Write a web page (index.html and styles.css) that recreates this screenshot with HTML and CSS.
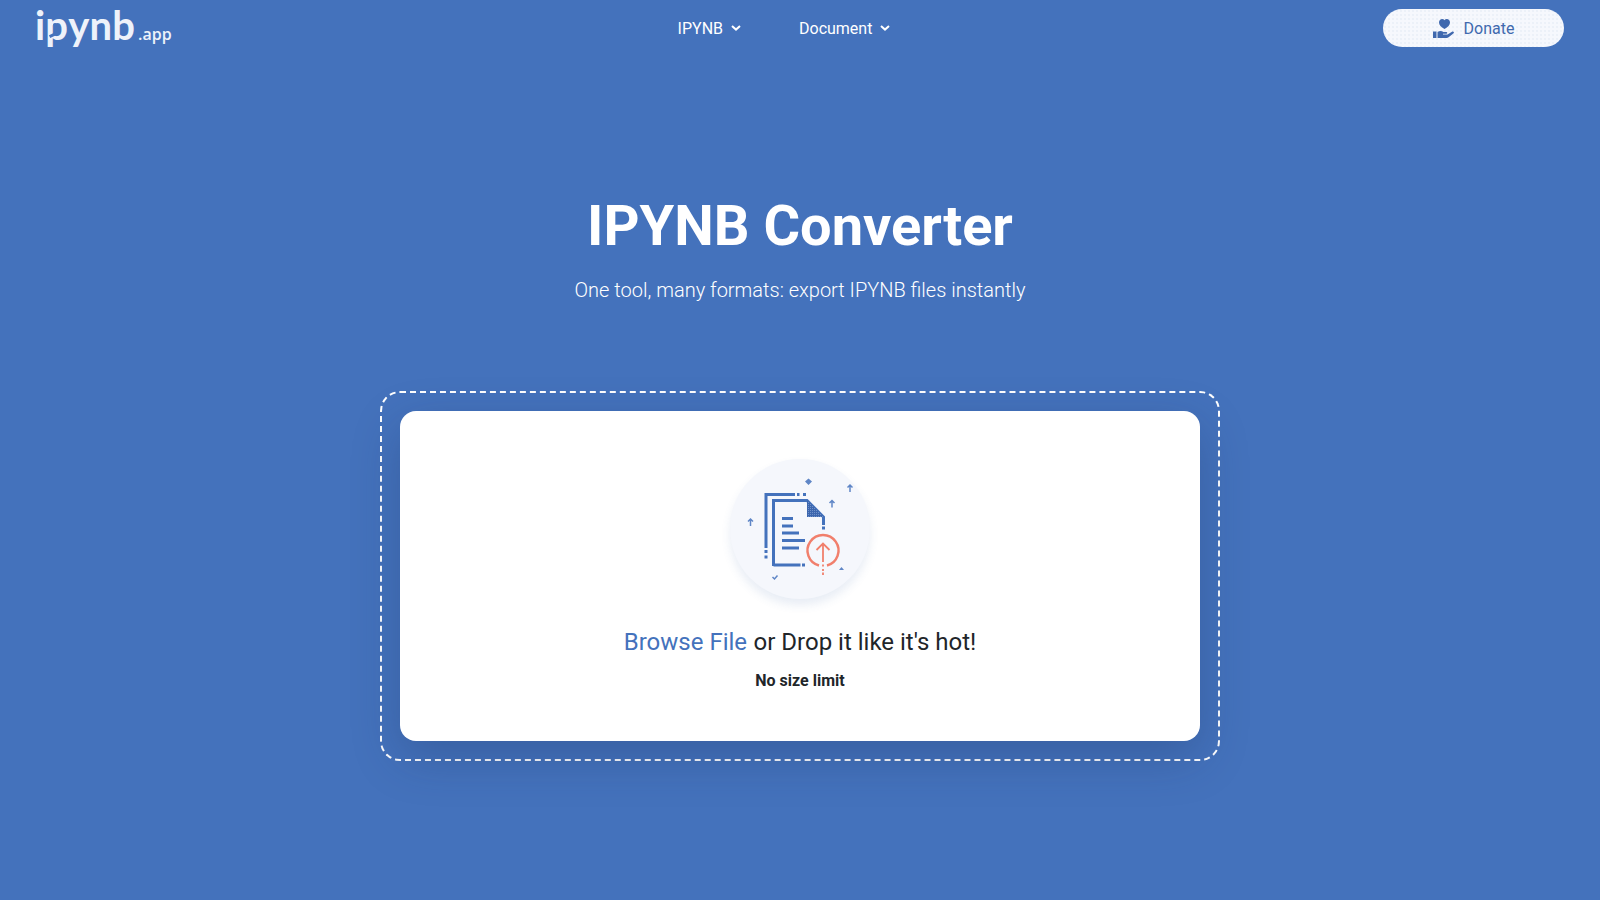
FILE: index.html
```html
<!DOCTYPE html>
<html lang="en">
<head>
<meta charset="utf-8">
<title>IPYNB Converter</title>
<link rel="stylesheet" href="styles.css">
</head>
<body>
<header class="topbar">
  <a class="logo" href="#"><span class="logo-main">i<span class="logo-p">p</span>ynb</span><span class="logo-app">.app</span></a>
  <nav class="nav">
    <a class="nav-link" href="#">IPYNB
      <svg class="chev" viewBox="0 0 10 6"><path d="M1 1l4 3.6L9 1" /></svg></a>
    <a class="nav-link" href="#">Document
      <svg class="chev" viewBox="0 0 10 6"><path d="M1 1l4 3.6L9 1" /></svg></a>
  </nav>
  <a class="donate" href="#">
    <svg class="donate-icon" viewBox="0 0 22 19"><path d="M11.500 10C8 7.800 6 6 6 3.400 6 1.400 7.500 0 9.200 0c1 0 1.800.4 2.300 1.200C12 .4 12.800 0 13.800 0 15.500 0 17 1.400 17 3.400 17 6 15 7.800 11.500 10z"/><path d="M0 12.500h3.500V19H0z"/><path d="M4.500 13c2-1.500 4-1.500 6 0h3c1 0 1 1.800 0 1.800H10v.7h4.500l4.500-2.800c1.200-.6 2.600.7 1.600 1.600l-5 4c-.6.500-1.200.7-2 .7H4.500z"/></svg>
    Donate
  </a>
</header>
<main class="main">
  <h1 class="title">IPYNB Converter</h1>
  <p class="subtitle">One tool, many formats: export IPYNB files instantly</p>
  <section class="dropzone">
    <div class="card">
      <div class="badge">
        <svg class="badge-art" viewBox="10 9 140 140">
          <defs>
            <pattern id="dots" width="2" height="2" patternUnits="userSpaceOnUse">
              <rect width="2" height="2" fill="#3c66ae"/>
              <rect width="1" height="1" fill="#6f90c9"/>
            </pattern>
          </defs>
          <g class="blue-line">
            <path d="M46 98V44.500H75M77 44.500h2.500M83 44.500h3M46 100v3M46 105.500v3"/>
            <path d="M53.500 116V50.500H87L103.500 67v8M103.500 76.500v3M53.500 115h27M82 115h3"/>
            <path d="M62 68.500h11M62 76h11M62 83h17M62 90.500h23M62 98h17"/>
          </g>
          <path class="fold" d="M87 50l17 17H87z"/>
          <g class="red-line">
            <path d="M99 115.500A15.500 15.500 0 1 1 107 115.500"/>
            <path class="red-thin" d="M103 94v18M96.500 100l6.500-6.500 6.500 6.500M103 114.500v2M103 119v2M103 122.500v2.500"/>
          </g>
          <g class="spark">
            <path d="M30.500 76v-7M28 71.500l2.500-2.500 2.500 2.500"/>
            <path d="M112 57.500v-7M109.500 53l2.500-2.500 2.500 2.500"/>
            <path d="M130 42v-7M127.500 37.500l2.500-2.500 2.500 2.500"/>
            <path d="M52.500 127l2 2 3-3.500"/>
          </g>
          <path class="spark-fill" d="M88.500 28.500l3.500 3-3.500 3.500-3.500-3.500zM121.500 117l2.500 3h-5z"/>
        </svg>
      </div>
      <p class="prompt"><a class="browse" href="#">Browse File</a> or Drop it like it's hot!</p>
      <p class="limit">No size limit</p>
    </div>
  </section>
</main>
</body>
</html>
```
FILE: styles.css
```css
* { box-sizing: border-box; }
html, body { height: 100%; }
body {
  margin: 0;
  background: #4472bc;
  font-family: Roboto, "Liberation Sans", sans-serif;
  color: #fff;
  overflow: hidden;
}
a { text-decoration: none; color: inherit; }
.topbar {
  display: grid;
  grid-template-columns: 149px 1fr 181px;
  align-items: center;
  height: 56px;
  padding: 0 36px;
}
.logo {
  display: flex;
  align-items: baseline;
  color: #eef2fa;
  line-height: 1;
  padding-bottom: 7px;
  margin-left: -1px;
}
.logo-main { font-family: Lato, sans-serif; font-size: 40px; font-weight: 700; letter-spacing: .15px; }
.logo-p { position: relative; }
.logo-p::before {
  content: "";
  position: absolute;
  left: 8px;
  top: 22px;
  width: 4px;
  height: 3px;
  border-radius: 50%;
  background: #4472bc;
}
.logo-p::after {
  content: "";
  position: absolute;
  left: 4px;
  top: 32px;
  width: 10px;
  height: 2.500px;
  background: #4472bc;
  transform: rotate(-25deg);
}
.logo-app { font-family: "Open Sans", sans-serif; font-size: 16px; font-weight: 600; margin-left: 3px; }
.nav { display: flex; gap: 58px; align-items: center; justify-self: center; }
.nav-link {
  display: flex;
  align-items: center;
  gap: 8px;
  font-size: 16px;
  color: #fff;
}
.chev { width: 10px; height: 6px; fill: none; stroke: #fff; stroke-width: 2; }
.donate {
  justify-self: end;
  width: 181px;
  height: 38px;
  display: flex;
  align-items: center;
  justify-content: center;
  gap: 9px;
  border-radius: 19px;
  background-color: #f6f8fd;
  background-image: radial-gradient(#ecf0f8 .7px, transparent .8px);
  background-size: 4px 4px;
  color: #4069ae;
  font-size: 16px;
}
.donate-icon { width: 22px; height: 19px; fill: #3f68ae; }
.main { display: flex; flex-direction: column; align-items: center; }
.title {
  margin: 134px 0 0;
  font-size: 56px;
  line-height: 72px;
  font-weight: 700;
}
.subtitle {
  margin: 13px 0 0;
  font-size: 20px;
  line-height: 30px;
  font-weight: 300;
}
.dropzone {
  margin-top: 86px;
  width: 840px;
  height: 370px;
  padding: 18px;
  border: 2px dashed #fff;
  border-radius: 20px;
}
.card {
  height: 100%;
  background: #fff;
  border-radius: 16px;
  display: flex;
  flex-direction: column;
  align-items: center;
  color: #212529;
  padding-top: 48px;
  box-shadow: 0 16px 48px rgba(25, 45, 90, .28);
}
.badge {
  width: 140px;
  height: 140px;
  border-radius: 50%;
  background-color: #f5f7fc;
  background-image: radial-gradient(#ecf0f9 .6px, transparent .7px);
  background-size: 4px 4px;
  box-shadow: 0 6px 10px rgba(64, 105, 174, .12);
}
.badge-art { display: block; width: 140px; height: 140px; }
.blue-line path { fill: none; stroke: #4472bc; stroke-width: 3; }
.fold { fill: url(#dots); }
.red-line { fill: none; stroke: #f17f6c; stroke-width: 2.500; }
.red-thin { stroke-width: 1.800; }
.spark { fill: none; stroke: #5f86c6; stroke-width: 1.500; }
.spark-fill { fill: #5f86c6; }
.prompt { margin: 28px 0 0; font-size: 24px; line-height: 30px; }
.browse { color: #4472bc; margin-right: .5px; }
.limit { margin: 12px 0 0; font-size: 16px; line-height: 24px; font-weight: 700; }
```
